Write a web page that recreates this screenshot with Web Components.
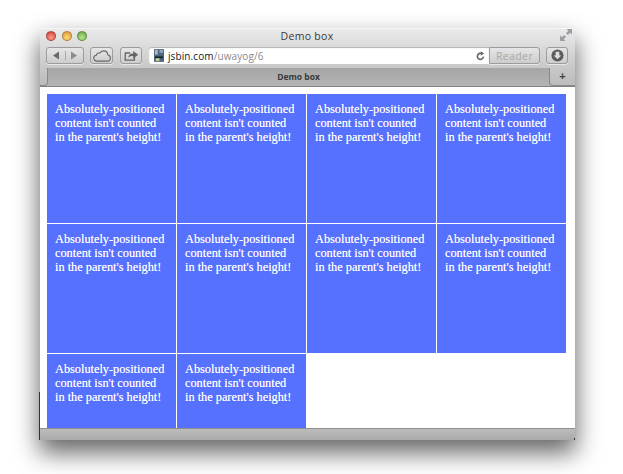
<!DOCTYPE html>
<html><head><meta charset="utf-8">
<style>
html,body{margin:0;height:474px;overflow:hidden;background:#fff;}
body{padding:28px 48px 0 40px;box-sizing:border-box;}
</style></head>
<body>
<browser-window title="Demo box" host-name="jsbin.com" path="/uwayog/6"><demo-grid count="10"></demo-grid></browser-window>
<script>
const icons={
  back:'<svg width="8" height="9" viewBox="0 0 8 9"><path d="M1 4.500 7 .5v8z" fill="#6a6a6a"/></svg>',
  forward:'<svg width="8" height="9" viewBox="0 0 8 9"><path d="M7 4.500 1 .5v8z" fill="#8c8c8c"/></svg>',
  cloud:'<svg width="18" height="12" viewBox="0 0 20 13"><path d="M5 12.200H4.500C2.300 12.200.8 10.700.8 8.900c0-1.700 1.200-3 2.900-3.200C4.200 3.600 6 2.700 7.500 3.300 8.500 1.500 10.100.8 11.800.8c2.500 0 4.300 1.700 4.600 4.300 1.700.4 2.900 1.800 2.900 3.500 0 2-1.500 3.600-3.600 3.600z" fill="none" stroke="#666" stroke-width="1.200"/></svg>',
  share:'<svg width="15" height="11" viewBox="0 0 18 13"><path d="M1.500 3.500h6M1.500 3v9h11V8" fill="none" stroke="#666" stroke-width="1.600"/><path d="M5 9c.3-3 2.300-4.800 6-5V1l6 4.500L11 10V7C8.500 7 6.500 7.500 5 9z" fill="#666"/></svg>',
  site:'<svg width="10" height="13" viewBox="0 0 11 14"><rect width="11" height="14" fill="#50667a"/><rect x="1" y="1" width="3" height="5" fill="#a9bfd1"/><rect x="6" y="1" width="4" height="3" fill="#8fa8bd"/><rect x="1" y="8" width="9" height="2" fill="#16242f"/><rect x="2" y="10" width="4" height="3" fill="#c8cf9a"/></svg>',
  reload:'<svg width="9" height="10" viewBox="0 0 10 11"><path d="M8.300 6.300A3.400 3.400 0 1 1 6.800 3" fill="none" stroke="#666" stroke-width="1.800"/><path d="M5.300.3 9 2.800 5.300 5.200z" fill="#666"/></svg>',
  download:'<svg width="13" height="13" viewBox="0 0 14 14"><circle cx="7" cy="7" r="6.500" fill="#5c5c5c"/><path d="M5 3h4v4h2l-4 4-4-4h2z" fill="#ddd"/></svg>',
  expand:'<svg width="12" height="12" viewBox="0 0 13 13"><path d="M7 0h6v6l-2-2-2.500 2.500-2-2L9 2zM6 13H0V7l2 2 2.500-2.500 2 2L4 11z" fill="#9a9ea2"/></svg>'
};
class BrowserWindow extends HTMLElement{
constructor(){
  super();
  this.attachShadow({mode:'open'}).innerHTML=`<style>
:host{
  display:flex;
  flex-direction:column;
  position:relative;
  width:535px;
  height:412px;
  font-family:"Open Sans","Liberation Sans",sans-serif;
  box-shadow:0 12px 24px 1px rgba(0,0,0,.6);
  border-radius:4px 4px 0 0;
  background:#fff;
}
:host::before{
  content:'';
  position:absolute;
  left:-1px;
  bottom:0;
  width:1px;
  height:48px;
  background:#333;
}
:host::after{
  content:'';
  position:absolute;
  right:0;
  bottom:0;
  width:1px;
  height:2px;
  background:#333;
}
.chrome{
  background:linear-gradient(#ebebeb,#c8c8c8 40px);
  height:40px;
  box-sizing:border-box;
  padding:1px 7px 0 6px;
  border-radius:4px 4px 0 0;
  box-shadow:inset 0 1px 0 #f6f6f6;
  display:flex;
  flex-direction:column;
}
.titlebar{
  display:grid;
  grid-template-columns:1fr auto 1fr;
  align-items:center;
  height:14px;
  margin-bottom:4px;
}
.lights{
  display:flex;
  gap:5.500px;
}
.lights i{
  width:10px;
  height:10px;
  box-sizing:border-box;
  border-radius:50%;
  border:1px solid rgba(0,0,0,.25);
}
.title{
  font-size:10.500px;
  color:#3a3a3a;
  letter-spacing:.3px;
}
.expand{
  justify-self:end;
  display:flex;
  margin:-2px -4px 0 0;
}
.tools{
  display:flex;
  align-items:center;
  height:17px;
}
.btn{
  box-sizing:border-box;
  height:17px;
  border:1px solid #9c9c9c;
  border-radius:3px;
  background:linear-gradient(#e6e6e6,#cdcdcd);
  box-shadow:0 1px 0 rgba(255,255,255,.55);
  display:flex;
  align-items:center;
  justify-content:center;
}
.nav{
  width:38px;
}
.nav span{
  flex:1;
  display:flex;
  justify-content:center;
}
.nav span+span{
  border-left:1px solid #a8a8a8;
}
.address{
  flex:1;
  display:flex;
  align-items:center;
  height:17px;
  box-sizing:border-box;
  background:#fff;
  border-radius:3px 0 0 3px;
  padding:0 4px 0 5px;
  margin-left:7px;
  font-size:10px;
  letter-spacing:.1px;
  box-shadow:inset 0 1px 1px rgba(0,0,0,.3);
}
.address b{
  font-weight:400;
  color:#222;
  margin-left:4px;
}
.address em{
  font-style:normal;
  color:#8a8a8a;
  flex:1;
}
.reader{
  width:51px;
  color:#a8a8a8;
  font-size:10.500px;
  letter-spacing:.4px;
  border-radius:0 3px 3px 0;
}
.tabs{
  height:19px;
  background:linear-gradient(#a6a6a6,#b4b4b4);
  border-bottom:1px solid #808080;
  box-sizing:border-box;
  display:flex;
}
.stub{
  width:8px;
  background:linear-gradient(#c8c8c8,#bcbcbc);
  border-right:1px solid #8a8a8a;
  border-bottom:1px solid #8a8a8a;
  border-radius:0 0 4px 0;
  box-sizing:border-box;
}
.tabname{
  flex:1;
  text-align:center;
  font-size:8.500px;
  font-weight:700;
  line-height:18px;
  color:#3a3a3a;
}
.plus{
  width:26px;
  box-sizing:border-box;
  background:linear-gradient(#c8c8c8,#bcbcbc);
  border-left:1px solid #8a8a8a;
  border-bottom:1px solid #8a8a8a;
  border-radius:0 0 0 4px;
  text-align:center;
  font:700 11px/17px "Liberation Sans",sans-serif;
  color:#444;
}
.content{
  flex:1;
  min-height:0;
  overflow:hidden;
  background:#fff;
}
.status{
  height:12px;
  background:linear-gradient(#bcbcbc,#aaa);
  border-top:1px solid #8f8f8f;
  box-sizing:border-box;
}
</style>
<div class="chrome">
  <div class="titlebar">
    <div class="lights"><i style="background:radial-gradient(circle at 50% 70%,#ff9a8c,#cf3a34)"></i><i style="background:radial-gradient(circle at 50% 70%,#ffdc7a,#d3902c)"></i><i style="background:radial-gradient(circle at 50% 70%,#b8e68a,#5fa040)"></i></div>
    <div class="title"></div>
    <div class="expand">${icons.expand}</div>
  </div>
  <div class="tools">
    <div class="btn nav"><span>${icons.back}</span><span>${icons.forward}</span></div>
    <div class="btn" style="width:23px;margin-left:6px">${icons.cloud}</div>
    <div class="btn" style="width:22px;margin-left:7px">${icons.share}</div>
    <div class="address">${icons.site}<b class="hostname"></b><em class="path"></em>${icons.reload}</div>
    <div class="btn reader">Reader</div>
    <div class="btn" style="width:22px;margin-left:6px">${icons.download}</div>
  </div>
</div>
<div class="tabs"><div class="stub"></div><div class="tabname"></div><div class="plus">+</div></div>
<div class="content"><slot></slot></div>
<div class="status"></div>`;
}
connectedCallback(){
  const root=this.shadowRoot;
  const title=this.getAttribute('title');
  root.querySelector('.title').textContent=title;
  root.querySelector('.tabname').textContent=title;
  root.querySelector('.hostname').textContent=this.getAttribute('host-name');
  root.querySelector('.path').textContent=this.getAttribute('path');
}
}
class DemoGrid extends HTMLElement{
constructor(){
  super();
  this.attachShadow({mode:'open'}).innerHTML=`<style>
:host{
  display:grid;
  grid-template-columns:repeat(4,129px);
  grid-auto-rows:129px;
  gap:1px;
  padding:7px;
}
.cell{
  background:#5771ff;
  color:#fff;
  font:12.300px/14px "Liberation Serif",serif;
  text-shadow:0 0 .6px rgba(255,255,255,.7);
  padding:7.500px 9px 8px 8px;
  box-sizing:border-box;
}
.line{
  display:block;
  white-space:nowrap;
}
</style>`;
}
connectedCallback(){
  const n=+this.getAttribute('count');
  for(let i=0;i<n;i++){
    const cell=document.createElement('div');
    cell.className='cell';
    for(const text of ["Absolutely-positioned","content isn't counted","in the parent's height!"]){
      const line=document.createElement('span');
      line.className='line';
      line.textContent=text;
      cell.appendChild(line);
    }
    this.shadowRoot.appendChild(cell);
  }
}
}
customElements.define('browser-window',BrowserWindow);
customElements.define('demo-grid',DemoGrid);
</script>
</body></html>
